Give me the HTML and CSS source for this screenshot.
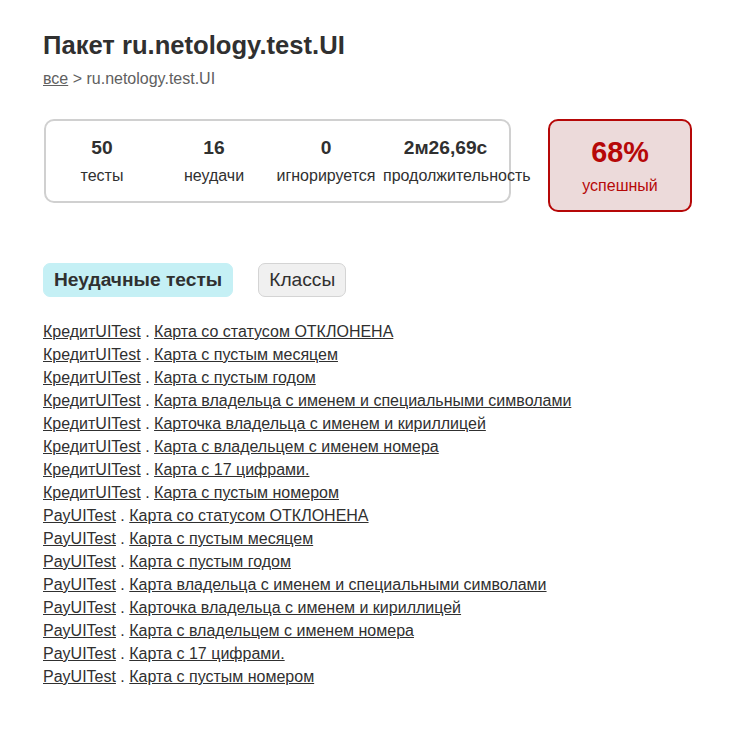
FILE: index.html
```html
<!DOCTYPE html>
<html lang="ru">
<head>
<meta charset="utf-8">
<title>Пакет ru.netology.test.UI</title>
<link rel="stylesheet" href="styles.css">
</head>
<body>
<div class="content">
  <h1 class="title">Пакет ru.netology.test.UI</h1>
  <div class="breadcrumbs"><a href="#">все</a> &gt; ru.netology.test.UI</div>
  <div class="summary">
    <div class="summary-group">
      <div class="info-box">
        <div class="counter">50</div>
        <p class="label">тесты</p>
      </div>
      <div class="info-box">
        <div class="counter">16</div>
        <p class="label">неудачи</p>
      </div>
      <div class="info-box">
        <div class="counter">0</div>
        <p class="label">игнорируется</p>
      </div>
      <div class="info-box duration">
        <div class="counter">2м26,69с</div>
        <p class="label">продолжительность</p>
      </div>
    </div>
    <div class="success-rate failures">
      <div class="percent">68%</div>
      <p class="label">успешный</p>
    </div>
  </div>
  <ul class="tab-links">
    <li class="tab selected"><a href="#">Неудачные тесты</a></li>
    <li class="tab"><a href="#">Классы</a></li>
  </ul>
  <ul class="link-list">
    <li><a href="#">КредитUITest</a> . <a href="#">Карта со статусом ОТКЛОНЕНА</a></li>
    <li><a href="#">КредитUITest</a> . <a href="#">Карта с пустым месяцем</a></li>
    <li><a href="#">КредитUITest</a> . <a href="#">Карта с пустым годом</a></li>
    <li><a href="#">КредитUITest</a> . <a href="#">Карта владельца с именем и специальными символами</a></li>
    <li><a href="#">КредитUITest</a> . <a href="#">Карточка владельца с именем и кириллицей</a></li>
    <li><a href="#">КредитUITest</a> . <a href="#">Карта с владельцем с именем номера</a></li>
    <li><a href="#">КредитUITest</a> . <a href="#">Карта с 17 цифрами.</a></li>
    <li><a href="#">КредитUITest</a> . <a href="#">Карта с пустым номером</a></li>
    <li><a href="#">PayUITest</a> . <a href="#">Карта со статусом ОТКЛОНЕНА</a></li>
    <li><a href="#">PayUITest</a> . <a href="#">Карта с пустым месяцем</a></li>
    <li><a href="#">PayUITest</a> . <a href="#">Карта с пустым годом</a></li>
    <li><a href="#">PayUITest</a> . <a href="#">Карта владельца с именем и специальными символами</a></li>
    <li><a href="#">PayUITest</a> . <a href="#">Карточка владельца с именем и кириллицей</a></li>
    <li><a href="#">PayUITest</a> . <a href="#">Карта с владельцем с именем номера</a></li>
    <li><a href="#">PayUITest</a> . <a href="#">Карта с 17 цифрами.</a></li>
    <li><a href="#">PayUITest</a> . <a href="#">Карта с пустым номером</a></li>
  </ul>
</div>
</body>
</html>
```

FILE: styles.css
```css
html, body {
  margin: 0;
  padding: 0;
  background: #ffffff;
}
body {
  font-family: "Liberation Sans", Arial, sans-serif;
  font-size: 16px;
  color: #303030;
}
a, a:visited {
  color: #303030;
}
.content {
  padding: 31px 43px;
}
.title {
  font-size: 25.6px;
  font-weight: bold;
  margin: 0 0 10px 0;
}
.breadcrumbs, .breadcrumbs a {
  color: #606060;
}
.summary {
  display: flex;
  align-items: flex-start;
  margin-top: 30px;
  margin-bottom: 40px;
  padding: 1px 0;
}
.summary-group {
  display: flex;
  margin-left: 1px;
  border: solid 2px #d0d0d0;
  border-radius: 10px;
}
.info-box {
  width: 110px;
  margin: 1px;
  padding: 15px 0;
  text-align: center;
}
.info-box.duration {
  width: 125px;
}
.label {
  margin: 0;
}
.counter, .percent {
  font-size: 19.2px;
  font-weight: bold;
  margin-bottom: 8px;
}
.success-rate {
  width: 140px;
  margin-left: 37px;
  padding: 15px 0;
  text-align: center;
  border: solid 2px #d0d0d0;
  border-radius: 10px;
}
.success-rate .percent {
  font-size: 28.8px;
}
.success-rate.failures {
  background-color: #ecdada;
  border-color: #b60808;
  color: #b60808;
}
.tab-links {
  display: flex;
  margin: 0;
  padding: 10px 0;
  list-style: none;
}
.tab {
  padding: 5px 10px;
  margin-right: 25px;
  border: solid 1px #d4d4d4;
  border-radius: 7px;
  background-color: #f0f0f0;
}
.tab.selected {
  background-color: #c5f0f5;
  border-color: #c5f0f5;
  font-weight: bold;
}
.tab a {
  font-size: 19.2px;
  display: block;
  text-decoration: none;
}
.link-list {
  list-style: none;
  padding-left: 0;
  margin: 16px 0;
}
.link-list li {
  margin-bottom: 5px;
}
```
